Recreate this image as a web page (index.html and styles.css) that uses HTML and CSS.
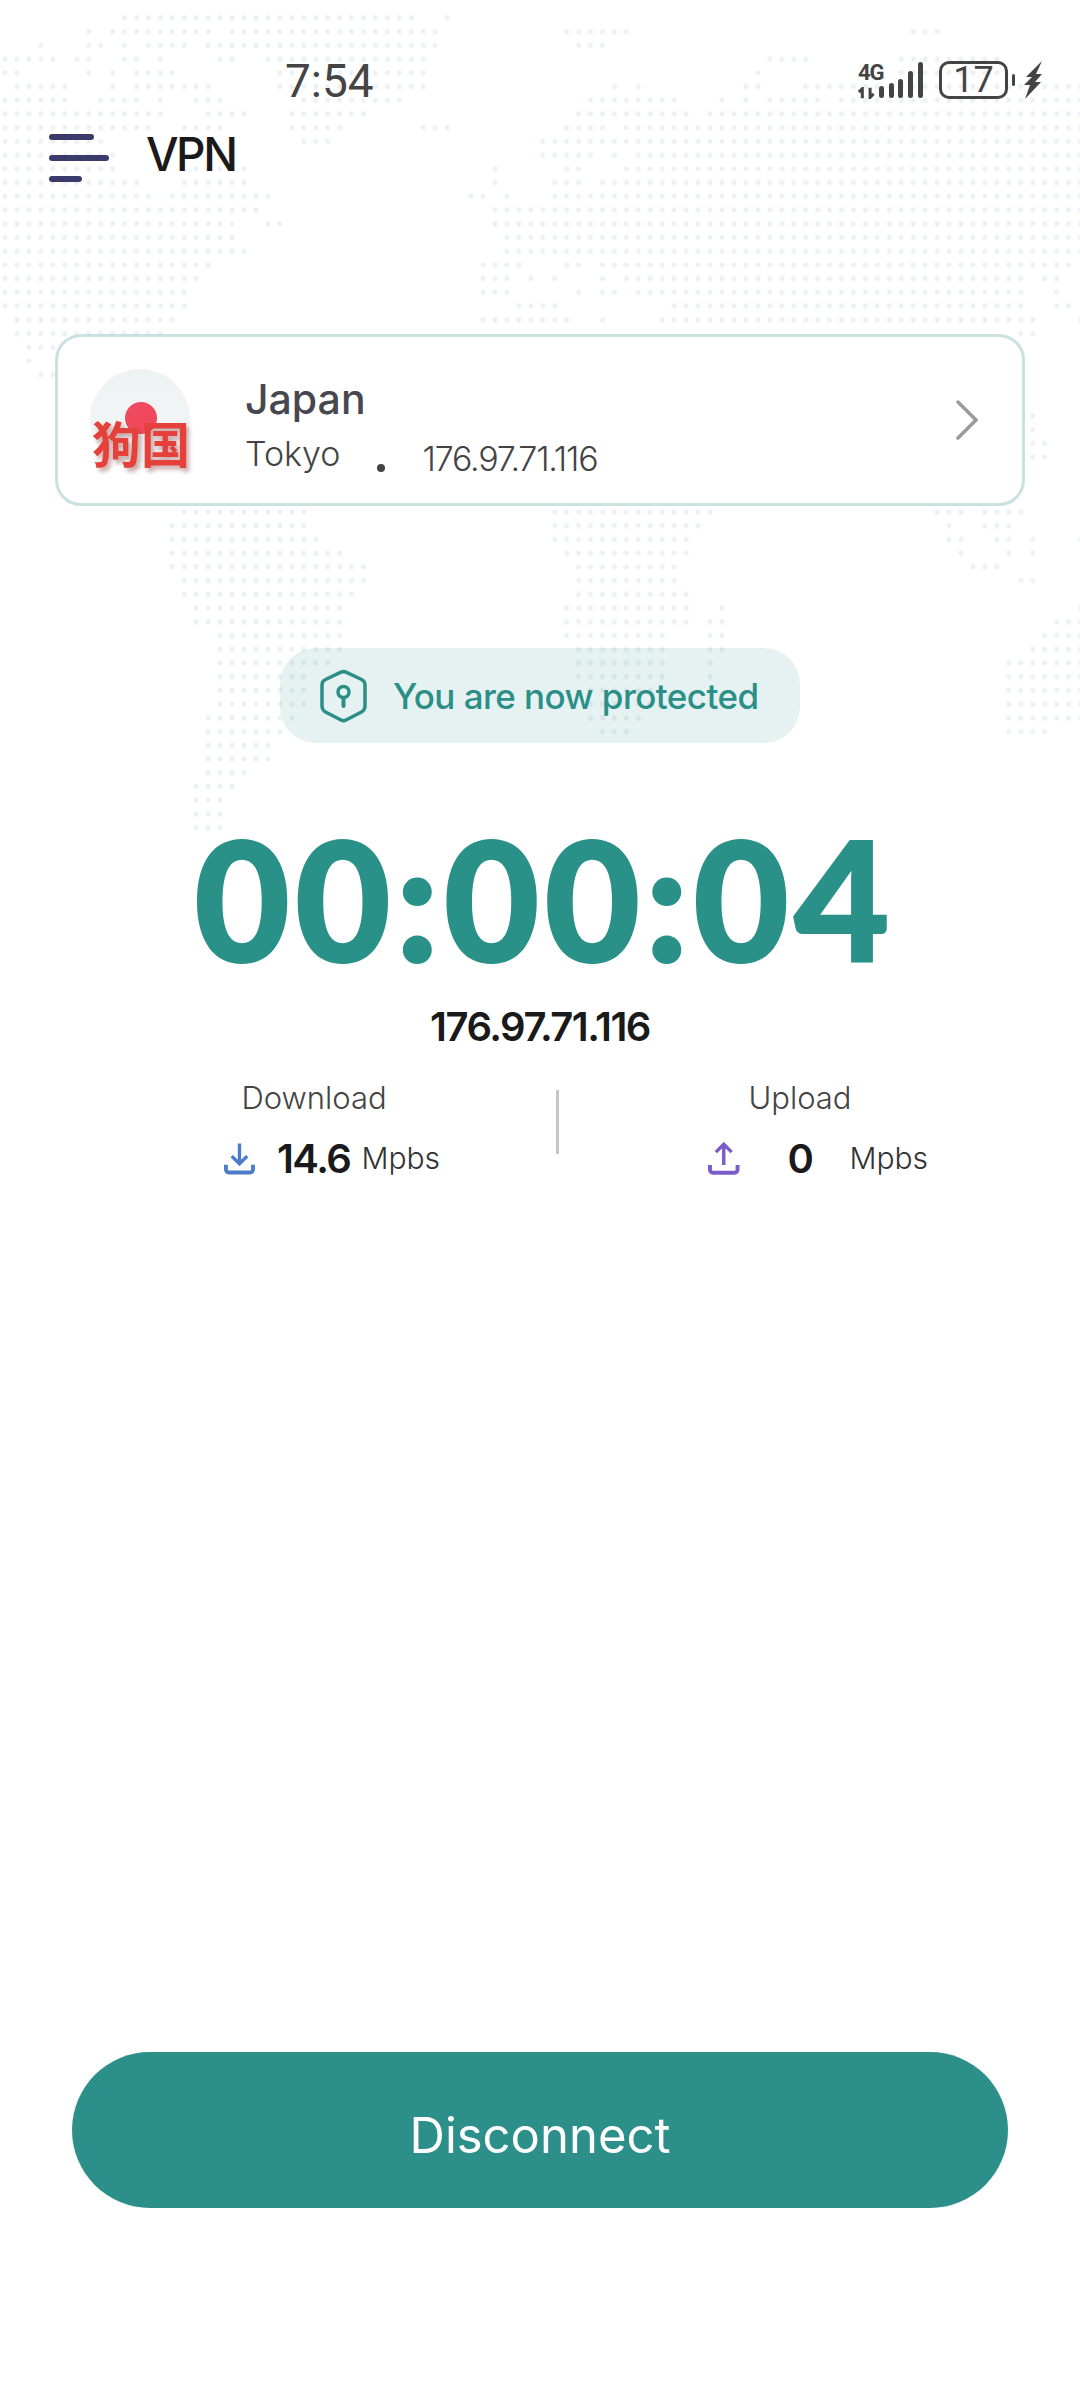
FILE: index.html
```html
<!DOCTYPE html>
<html lang="en">
<head>
  <meta charset="UTF-8" />
  <meta name="viewport" content="width=device-width, initial-scale=1.0"/>
  <title>VPN</title>
  <link rel="stylesheet" href="styles.css">
</head>
<body>

<!-- Dotted world map behind everything, one span per row in grid units -->
<svg class="world-map" viewBox=".08 -.81 90.38 174.9" preserveAspectRatio="none">
  <defs>
    <pattern id="dots" width="1" height="1" patternUnits="userSpaceOnUse">
      <ellipse cx=".5" cy=".5" rx=".21" ry=".19" fill="#edf1f3" />
    </pattern>
  </defs>
  <path fill="url(#dots)" d="
    M10 0h25v1h-25zM37 0h1v1h-1z
    M7 1h1v1h-1zM9 1h9v1h-9zM19 1h18v1h-18zM47 1h6v1h-6zM76 1h3v1h-3z
    M3 2h1v1h-1zM7 2h2v1h-2zM10 2h1v1h-1zM12 2h4v1h-4zM17 2h20v1h-20zM48 2h3v1h-3z
    M0 3h5v1h-5zM6 3h2v1h-2zM10 3h2v1h-2zM13 3h1v1h-1zM18 3h2v1h-2zM22 3h14v1h-14zM64 3h4v1h-4zM75 3h9v1h-9z
    M0 4h2v1h-2zM7 4h1v1h-1zM9 4h1v1h-1zM11 4h4v1h-4zM23 4h13v1h-13zM63 4h1v1h-1zM75 4h9v1h-9z
    M1 5h5v1h-5zM9 5h1v1h-1zM11 5h7v1h-7zM23 5h13v1h-13zM51 5h1v1h-1zM53 5h1v1h-1zM62 5h2v1h-2zM67 5h24v1h-24z
    M0 6h6v1h-6zM8 6h4v1h-4zM13 6h1v1h-1zM16 6h3v1h-3zM25 6h9v1h-9zM49 6h8v1h-8zM60 6h1v1h-1zM62 6h1v1h-1zM64 6h5v1h-5zM70 6h21v1h-21z
    M0 7h14v1h-14zM17 7h4v1h-4zM24 7h7v1h-7zM48 7h10v1h-10zM59 7h32v1h-32z
    M0 8h13v1h-13zM15 8h4v1h-4zM24 8h5v1h-5zM35 8h3v1h-3zM47 8h4v1h-4zM52 8h39v1h-39z
    M0 9h9v1h-9zM25 9h3v1h-3zM45 9h5v1h-5zM50 9h41v1h-41z
    M0 10h10v1h-10zM45 10h5v1h-5zM51 10h1v1h-1zM53 10h38v1h-38z
    M0 11h10v1h-10zM16 11h5v1h-5zM41 11h1v1h-1zM47 11h2v1h-2zM52 11h39v1h-39z
    M0 12h12v1h-12zM15 12h6v1h-6zM41 12h1v1h-1zM46 12h3v1h-3zM50 12h41v1h-41z
    M0 13h13v1h-13zM14 13h9v1h-9zM39 13h2v1h-2zM42 13h1v1h-1zM46 13h45v1h-45z
    M0 14h22v1h-22zM41 14h50v1h-50z
    M0 15h20v1h-20zM22 15h2v1h-2zM41 15h50v1h-50z
    M0 16h20v1h-20zM42 16h49v1h-49z
    M0 17h21v1h-21zM42 17h49v1h-49z
    M0 18h18v1h-18zM40 18h4v1h-4zM47 18h2v1h-2zM50 18h40v1h-40z
    M0 19h17v1h-17zM40 19h3v1h-3zM44 19h1v1h-1zM46 19h1v1h-1zM50 19h1v1h-1zM52 19h34v1h-34zM87 19h2v1h-2z
    M0 20h16v1h-16zM40 20h3v1h-3zM48 20h1v1h-1zM50 20h2v1h-2zM53 20h33v1h-33zM88 20h1v1h-1z
    M0 21h16v1h-16zM43 21h4v1h-4zM56 21h30v1h-30zM88 21h2v1h-2z
    M1 22h14v1h-14zM40 22h8v1h-8zM50 22h1v1h-1zM55 22h32v1h-32zM90 22h1v1h-1z
    M1 23h13v1h-13zM85 23h2v1h-2z
    M2 24h3v1h-3zM2 25h1v1h-1zM3 26h2v1h-2z
    M86 29h1v2h-1zM86 31h2v2h-2z
    M15 36h11v1h-11zM46 36h14v1h-14zM78 36h3v1h-3zM82 36h4v1h-4z
    M14 37h12v1h-12zM46 37h13v1h-13zM79 37h1v1h-1zM82 37h3v1h-3z
    M14 38h13v1h-13zM46 38h12v1h-12zM79 38h2v1h-2zM83 38h2v1h-2zM86 38h1v1h-1zM90 38h1v1h-1z
    M14 39h15v1h-15zM47 39h11v1h-11zM80 39h1v1h-1zM84 39h1v1h-1zM86 39h1v1h-1z
    M14 40h17v1h-17zM48 40h9v1h-9zM81 40h3v1h-3z
    M15 41h16v1h-16zM48 41h9v1h-9zM85 41h2v1h-2z
    M15 42h15v1h-15zM48 42h10v1h-10z
    M16 43h13v1h-13zM47 43h11v1h-11zM60 43h1v1h-1zM90 43h1v1h-1z
    M16 44h13v1h-13zM47 44h11v1h-11zM59 44h2v1h-2zM88 44h3v1h-3z
    M18 45h11v1h-11zM47 45h9v1h-9zM59 45h2v1h-2zM87 45h4v1h-4z
    M18 46h11v1h-11zM48 46h8v1h-8zM59 46h2v1h-2zM86 46h5v1h-5z
    M18 47h10v1h-10zM48 47h8v1h-8zM59 47h1v1h-1zM84 47h7v1h-7z
    M18 48h8v1h-8zM48 48h8v1h-8zM59 48h1v1h-1zM84 48h7v1h-7z
    M18 49h8v1h-8zM49 49h6v1h-6zM84 49h7v1h-7z
    M18 50h8v1h-8zM49 50h6v1h-6zM84 50h7v1h-7z
    M17 51h8v1h-8zM49 51h5v1h-5zM84 51h7v1h-7z
    M17 52h7v1h-7zM50 52h3v1h-3zM84 52h4v1h-4z
    M17 53h6v2h-6zM17 55h4v1h-4zM16 56h4v1h-4zM16 57h3v3h-3z" />
</svg>

<div class="page">
  <!-- Phone status bar -->
  <div class="status-bar">
    <span class="clock">7:54</span>
    <div class="status-icons">
      <div class="network">
        <span class="network-type">4G</span>
        <svg class="network-arrows" viewBox="0 0 22 12">
          <path d="M5 12V1L1 5M14 0v11l4-4" fill="none" stroke="#444" stroke-width="3.5" />
        </svg>
      </div>
      <svg class="signal" viewBox="0 0 44 36">
        <rect x="0" y="24" width="5" height="12" rx="2.5" />
        <rect x="10" y="21" width="5" height="15" rx="2.5" />
        <rect x="19" y="17" width="5" height="19" rx="2.5" />
        <rect x="29" y="9" width="5" height="27" rx="2.5" />
        <rect x="39" y="0" width="5" height="36" rx="2.5" />
      </svg>
      <div class="battery">17</div>
      <div class="battery-nub"></div>
      <svg class="bolt" viewBox="0 0 18 38">
        <path d="M18 0 2 16h6L0 24h6L1 38 17 21h-6l7-8h-6z" fill="#444" />
      </svg>
    </div>
  </div>

  <!-- Title row -->
  <div class="topbar">
    <div class="menu-icon">
      <span class="bar-top"></span>
      <span class="bar-mid"></span>
      <span class="bar-low"></span>
    </div>
    <h1 class="title">VPN</h1>
  </div>

  <!-- Selected server -->
  <div class="server-card">
    <div class="flag">
      <span class="flag-sun"></span>
      <span class="flag-text">狗国</span>
    </div>
    <div class="server-info">
      <div class="country">Japan</div>
      <div class="server-line">
        <span class="city">Tokyo</span>
        <span class="dot"></span>
        <span class="server-ip">176.97.71.116</span>
      </div>
    </div>
    <svg class="chevron" viewBox="0 0 22 40">
      <path d="M2 2l18 18L2 38" fill="none" stroke="#9a9a9a" stroke-width="3.5" stroke-linecap="round" />
    </svg>
  </div>

  <!-- Connection state -->
  <div class="protected">
    <svg class="shield" viewBox="0 0 47 54">
      <path d="M21 3.2a6 6 0 0 1 5 0L41.500 10.500Q45 12 45 16V37q0 4-3.500 6L26 51a5 5 0 0 1-5 0L5.500 43Q2 41 2 37V16q0-4 3.500-5.500z" fill="none" stroke="#2b8f88" stroke-width="3.500" />
      <circle cx="23.500" cy="23" r="5.500" fill="none" stroke="#2b8f88" stroke-width="3.500" />
      <path d="M23.500 29v8" stroke="#2b8f88" stroke-width="4" stroke-linecap="round" />
    </svg>
    <span>You are now protected</span>
  </div>

  <div class="timer">00:00:04</div>
  <div class="public-ip">176.97.71.116</div>

  <!-- Speeds -->
  <div class="stats">
    <div class="stat stat-down">
      <div class="stat-label">Download</div>
      <div class="stat-row">
        <svg class="stat-icon" viewBox="0 0 32 33">
          <path d="M16 1v21M8 14l8 8 8-8" fill="none" stroke="#4a7cc9" stroke-width="3.500" />
          <path d="M2 23v5a3 3 0 0 0 3 3h22a3 3 0 0 0 3-3v-5" fill="none" stroke="#4a7cc9" stroke-width="4" />
        </svg>
        <span class="stat-value">14.6</span>
        <span class="stat-unit">Mpbs</span>
      </div>
    </div>
    <div class="divider"></div>
    <div class="stat stat-up">
      <div class="stat-label">Upload</div>
      <div class="stat-row">
        <svg class="stat-icon" viewBox="0 0 32 33">
          <path d="M16 23V2M8 10l8-8 8 8" fill="none" stroke="#7b5cc9" stroke-width="3.500" />
          <path d="M2 23v5a3 3 0 0 0 3 3h22a3 3 0 0 0 3-3v-5" fill="none" stroke="#7b5cc9" stroke-width="4" />
        </svg>
        <span class="stat-value stat-value-wide">0</span>
        <span class="stat-unit">Mpbs</span>
      </div>
    </div>
  </div>

  <button class="disconnect">Disconnect</button>
</div>

</body>
</html>
```

FILE: styles.css
```css
body, html {
  margin: 0;
  padding: 0;
  background: #fff;
  font-family: "Inter", "Noto Sans", sans-serif;
}

.world-map {
  position: absolute;
  top: 0;
  left: 0;
  width: 1080px;
  height: 2400px;
}

.page {
  position: relative;
  width: 1080px;
  height: 2400px;
  display: flex;
  flex-direction: column;
}

/* status bar */
.status-bar {
  height: 134px;
  box-sizing: border-box;
  padding: 54px 38px 0 285px;
  display: flex;
  justify-content: space-between;
  align-items: flex-start;
}

.clock {
  font-family: "Roboto", sans-serif;
  font-size: 46px;
  line-height: 54px;
  color: #444;
}

.status-icons {
  display: flex;
  align-items: flex-start;
  margin-top: 7px;
}

.network {
  width: 30px;
  height: 36px;
  margin-top: 2px;
  display: flex;
  flex-direction: column;
}

.network-type {
  font-family: "Roboto", sans-serif;
  font-weight: 700;
  font-size: 22px;
  line-height: 20px;
  letter-spacing: -1px;
  color: #444;
}

.network-arrows {
  width: 19px;
  height: 12px;
  margin-top: 4px;
}

.signal {
  width: 44px;
  height: 36px;
  margin-top: 1px;
  margin-left: -9px;
  fill: #444;
}

.battery {
  width: 69px;
  height: 38px;
  box-sizing: border-box;
  margin-left: 16px;
  border: 3px solid #444;
  border-radius: 10px;
  font-family: "Roboto", sans-serif;
  font-size: 36px;
  line-height: 32px;
  text-align: center;
  color: #444;
}

.battery-nub {
  width: 3px;
  height: 12px;
  margin: 13px 0 0 4px;
  border-radius: 2px;
  background: #444;
}

.bolt {
  width: 18px;
  height: 38px;
  margin-left: 9px;
}

/* title row */
.topbar {
  height: 48px;
  padding-left: 49px;
  display: flex;
  align-items: center;
}

.menu-icon {
  width: 60px;
  height: 48px;
  display: flex;
  flex-direction: column;
  justify-content: space-between;
}

.menu-icon span {
  display: block;
  height: 6px;
  border-radius: 3px;
  background: #3b3b6b;
}

.bar-top { width: 45px; }
.bar-mid { width: 60px; }
.bar-low { width: 33px; }

.title {
  margin: -8px 0 0 37px;
  font-size: 46px;
  font-weight: 500;
  letter-spacing: -2.5px;
  color: #1a1a1a;
}

/* server card */
.server-card {
  height: 172px;
  box-sizing: border-box;
  margin: 152px 55px 0;
  padding: 0 44px 0 32px;
  display: flex;
  align-items: center;
  background: #fff;
  border: 3px solid #cbe0e1;
  border-radius: 26px;
}

.flag {
  position: relative;
  width: 100px;
  height: 106px;
  margin-top: 4px;
}

.flag::before {
  content: "";
  position: absolute;
  top: 0;
  left: 0;
  width: 100px;
  height: 100px;
  border-radius: 50%;
  background: linear-gradient(#eef2f2, #f5f7f7);
}

.flag-sun {
  position: absolute;
  top: 33px;
  left: 35px;
  width: 32px;
  height: 32px;
  border-radius: 50%;
  background: #f0495e;
}

.flag-text {
  position: absolute;
  top: 43px;
  left: 2px;
  font-family: "Noto Sans CJK SC", sans-serif;
  font-size: 49px;
  font-weight: 700;
  line-height: 60px;
  white-space: nowrap;
  color: #e5413a;
  text-shadow: 3px 4px 4px rgba(110, 20, 20, 0.35);
}

.server-info {
  margin-left: 55px;
  margin-top: 14px;
}

.country {
  font-size: 41px;
  font-weight: 500;
  line-height: 50px;
  color: #47474f;
}

.server-line {
  display: flex;
  align-items: center;
  margin-top: 3px;
  font-size: 34px;
  font-weight: 300;
  line-height: 44px;
  color: #444;
}

.dot {
  width: 8px;
  height: 8px;
  margin: 28px 0 0 37px;
  border-radius: 50%;
  background: #444;
}

.server-ip {
  margin: 10px 0 0 37px;
  letter-spacing: -1.2px;
}

.chevron {
  width: 22px;
  height: 40px;
  margin-left: auto;
}

/* protected pill */
.protected {
  align-self: center;
  width: 520px;
  height: 95px;
  box-sizing: border-box;
  margin-top: 142px;
  padding-left: 40px;
  display: flex;
  align-items: center;
  gap: 26px;
  background: rgba(41, 145, 137, 0.12);
  border-radius: 36px;
  font-size: 35px;
  font-weight: 500;
  letter-spacing: -0.55px;
  color: #2b8f88;
}

.shield {
  width: 47px;
  height: 54px;
}

/* timer */
.timer {
  margin-top: 55px;
  padding-left: 9px;
  text-align: center;
  font-family: "Lato", sans-serif;
  font-size: 165px;
  font-weight: 900;
  line-height: 200px;
  letter-spacing: 5px;
  color: #2a9189;
  -webkit-text-stroke: 2px #2a9189;
}

.public-ip {
  margin-top: 5px;
  text-align: center;
  font-size: 40px;
  font-weight: 600;
  line-height: 48px;
  letter-spacing: -1.5px;
  color: #1a1a1a;
}

/* speeds */
.stats {
  margin-top: 27px;
  padding-left: 224px;
  display: flex;
  align-items: flex-start;
}

.stat-label {
  padding-right: 36px;
  text-align: center;
  font-size: 31px;
  font-weight: 300;
  line-height: 40px;
  color: #444;
}

.stat-row {
  margin-top: 18px;
  display: flex;
  align-items: center;
  height: 44px;
}

.stat-down { width: 216px; }
.stat-up { width: 220px; }

.stat-icon {
  width: 32px;
  height: 33px;
  margin-right: 22px;
}

.stat-value {
  font-size: 40px;
  font-weight: 600;
  letter-spacing: -1.5px;
  color: #1a1a1a;
  margin-right: 11px;
}

.stat-value-wide {
  width: 78px;
  text-align: center;
}

.stat-unit {
  font-size: 30px;
  font-weight: 300;
  color: #333;
}

.divider {
  width: 3px;
  height: 64px;
  margin: 12px 149px 0 116px;
  background: #c5c5c5;
}

/* button */
.disconnect {
  margin: auto 72px 192px;
  height: 156px;
  padding-top: 11px;
  border: none;
  border-radius: 78px;
  background: #2c8f89;
  font-family: "Inter", sans-serif;
  font-size: 49px;
  font-weight: 400;
  color: #fff;
}
```
